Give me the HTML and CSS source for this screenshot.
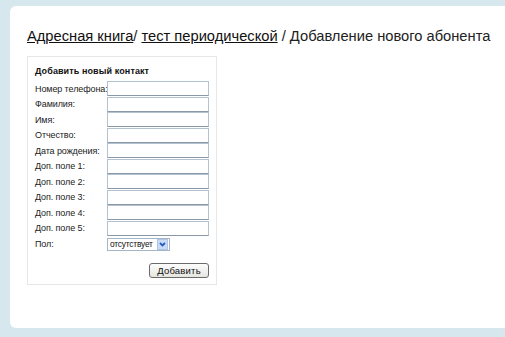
FILE: index.html
```html
<!DOCTYPE html>
<html>
<head>
<meta charset="utf-8">
<link rel="stylesheet" href="styles.css">
</head>
<body>
<div class="page">
  <div class="crumbs"><a href="#">Адресная книга</a>/ <a href="#">тест периодической</a> / Добавление нового абонента</div>
  <div class="box">
    <div class="title">Добавить новый контакт</div>
    <div class="form">
      <div class="row"><span class="lbl">Номер телефона:</span><span class="inp"></span></div>
      <div class="row"><span class="lbl">Фамилия:</span><span class="inp"></span></div>
      <div class="row"><span class="lbl">Имя:</span><span class="inp"></span></div>
      <div class="row"><span class="lbl">Отчество:</span><span class="inp"></span></div>
      <div class="row"><span class="lbl">Дата рождения:</span><span class="inp"></span></div>
      <div class="row"><span class="lbl">Доп. поле 1:</span><span class="inp"></span></div>
      <div class="row"><span class="lbl">Доп. поле 2:</span><span class="inp"></span></div>
      <div class="row"><span class="lbl">Доп. поле 3:</span><span class="inp"></span></div>
      <div class="row"><span class="lbl">Доп. поле 4:</span><span class="inp"></span></div>
      <div class="row"><span class="lbl">Доп. поле 5:</span><span class="inp"></span></div>
      <div class="row sel-row"><span class="lbl">Пол:</span>
        <span class="sel"><span class="sel-text">отсутствует</span><span class="arrow"><svg width="9" height="9" viewBox="0 0 9 9"><path d="M2 3 L4.5 5.5 L7 3" fill="none" stroke="#2a5cc0" stroke-width="1.8"/></svg></span></span>
      </div>
      <div class="actions"><span class="btn">Добавить</span></div>
    </div>
  </div>
</div>
</body>
</html>
```

FILE: styles.css
```css
html, body {
  margin: 0;
  padding: 0;
}
body {
  background: #d6e8ed;
  width: 505px;
  height: 337px;
  overflow: hidden;
  font-family: "Liberation Sans", Arial, sans-serif;
  color: #111;
}
.page {
  margin: 6px 0 0 10px;
  height: 322px;
  background: #fff;
  border-radius: 6px 0 0 6px;
  padding: 21px 0 0 17px;
  box-sizing: border-box;
}
.crumbs {
  font-size: 14.7px;
  line-height: 18px;
  color: #222;
  white-space: nowrap;
}
.crumbs a {
  color: #111;
  text-decoration: underline;
}
.box {
  margin-top: 11px;
  width: 190px;
  height: 229px;
  border: 1px solid #e4e8ea;
  box-sizing: border-box;
  padding: 8px 0 0 7px;
}
.title {
  font-size: 9px;
  font-weight: bold;
  line-height: 12px;
  margin-bottom: 4px;
  letter-spacing: 0.1px;
}
.row {
  display: flex;
  align-items: center;
  height: 15.5px;
}
.lbl {
  width: 72px;
  font-size: 9px;
  color: #222;
  white-space: nowrap;
  letter-spacing: -0.1px;
}
.inp {
  width: 102px;
  height: 15px;
  box-sizing: border-box;
  border: 1px solid #b4c2d0;
  border-bottom-color: #8a99a8;
  background: #fff;
}
.sel-row {
  height: 14px;
  margin-top: 1px;
}
.sel {
  display: flex;
  align-items: center;
  height: 13px;
  width: 63px;
  box-sizing: border-box;
  border: 1px solid #a5b5c8;
  font-size: 8.4px;
  letter-spacing: -0.2px;
}
.sel-text {
  flex: 1;
  padding-left: 2px;
  white-space: nowrap;
}
.arrow {
  width: 11px;
  height: 11px;
  background: #c9dcf7;
  border: 1px solid #b0c4e4;
  box-sizing: border-box;
  display: flex;
  align-items: center;
  justify-content: center;
  margin-right: 1px;
}
.actions {
  display: flex;
  justify-content: flex-end;
  width: 174px;
  margin-top: 12px;
}
.btn {
  display: inline-block;
  width: 60px;
  height: 15px;
  box-sizing: border-box;
  border: 1px solid #6b6b6b;
  border-radius: 3px;
  background: linear-gradient(#fdfdfd, #e6e6e0);
  font-size: 9.5px;
  line-height: 13px;
  text-align: center;
  color: #111;
  letter-spacing: 0.2px;
}
```
